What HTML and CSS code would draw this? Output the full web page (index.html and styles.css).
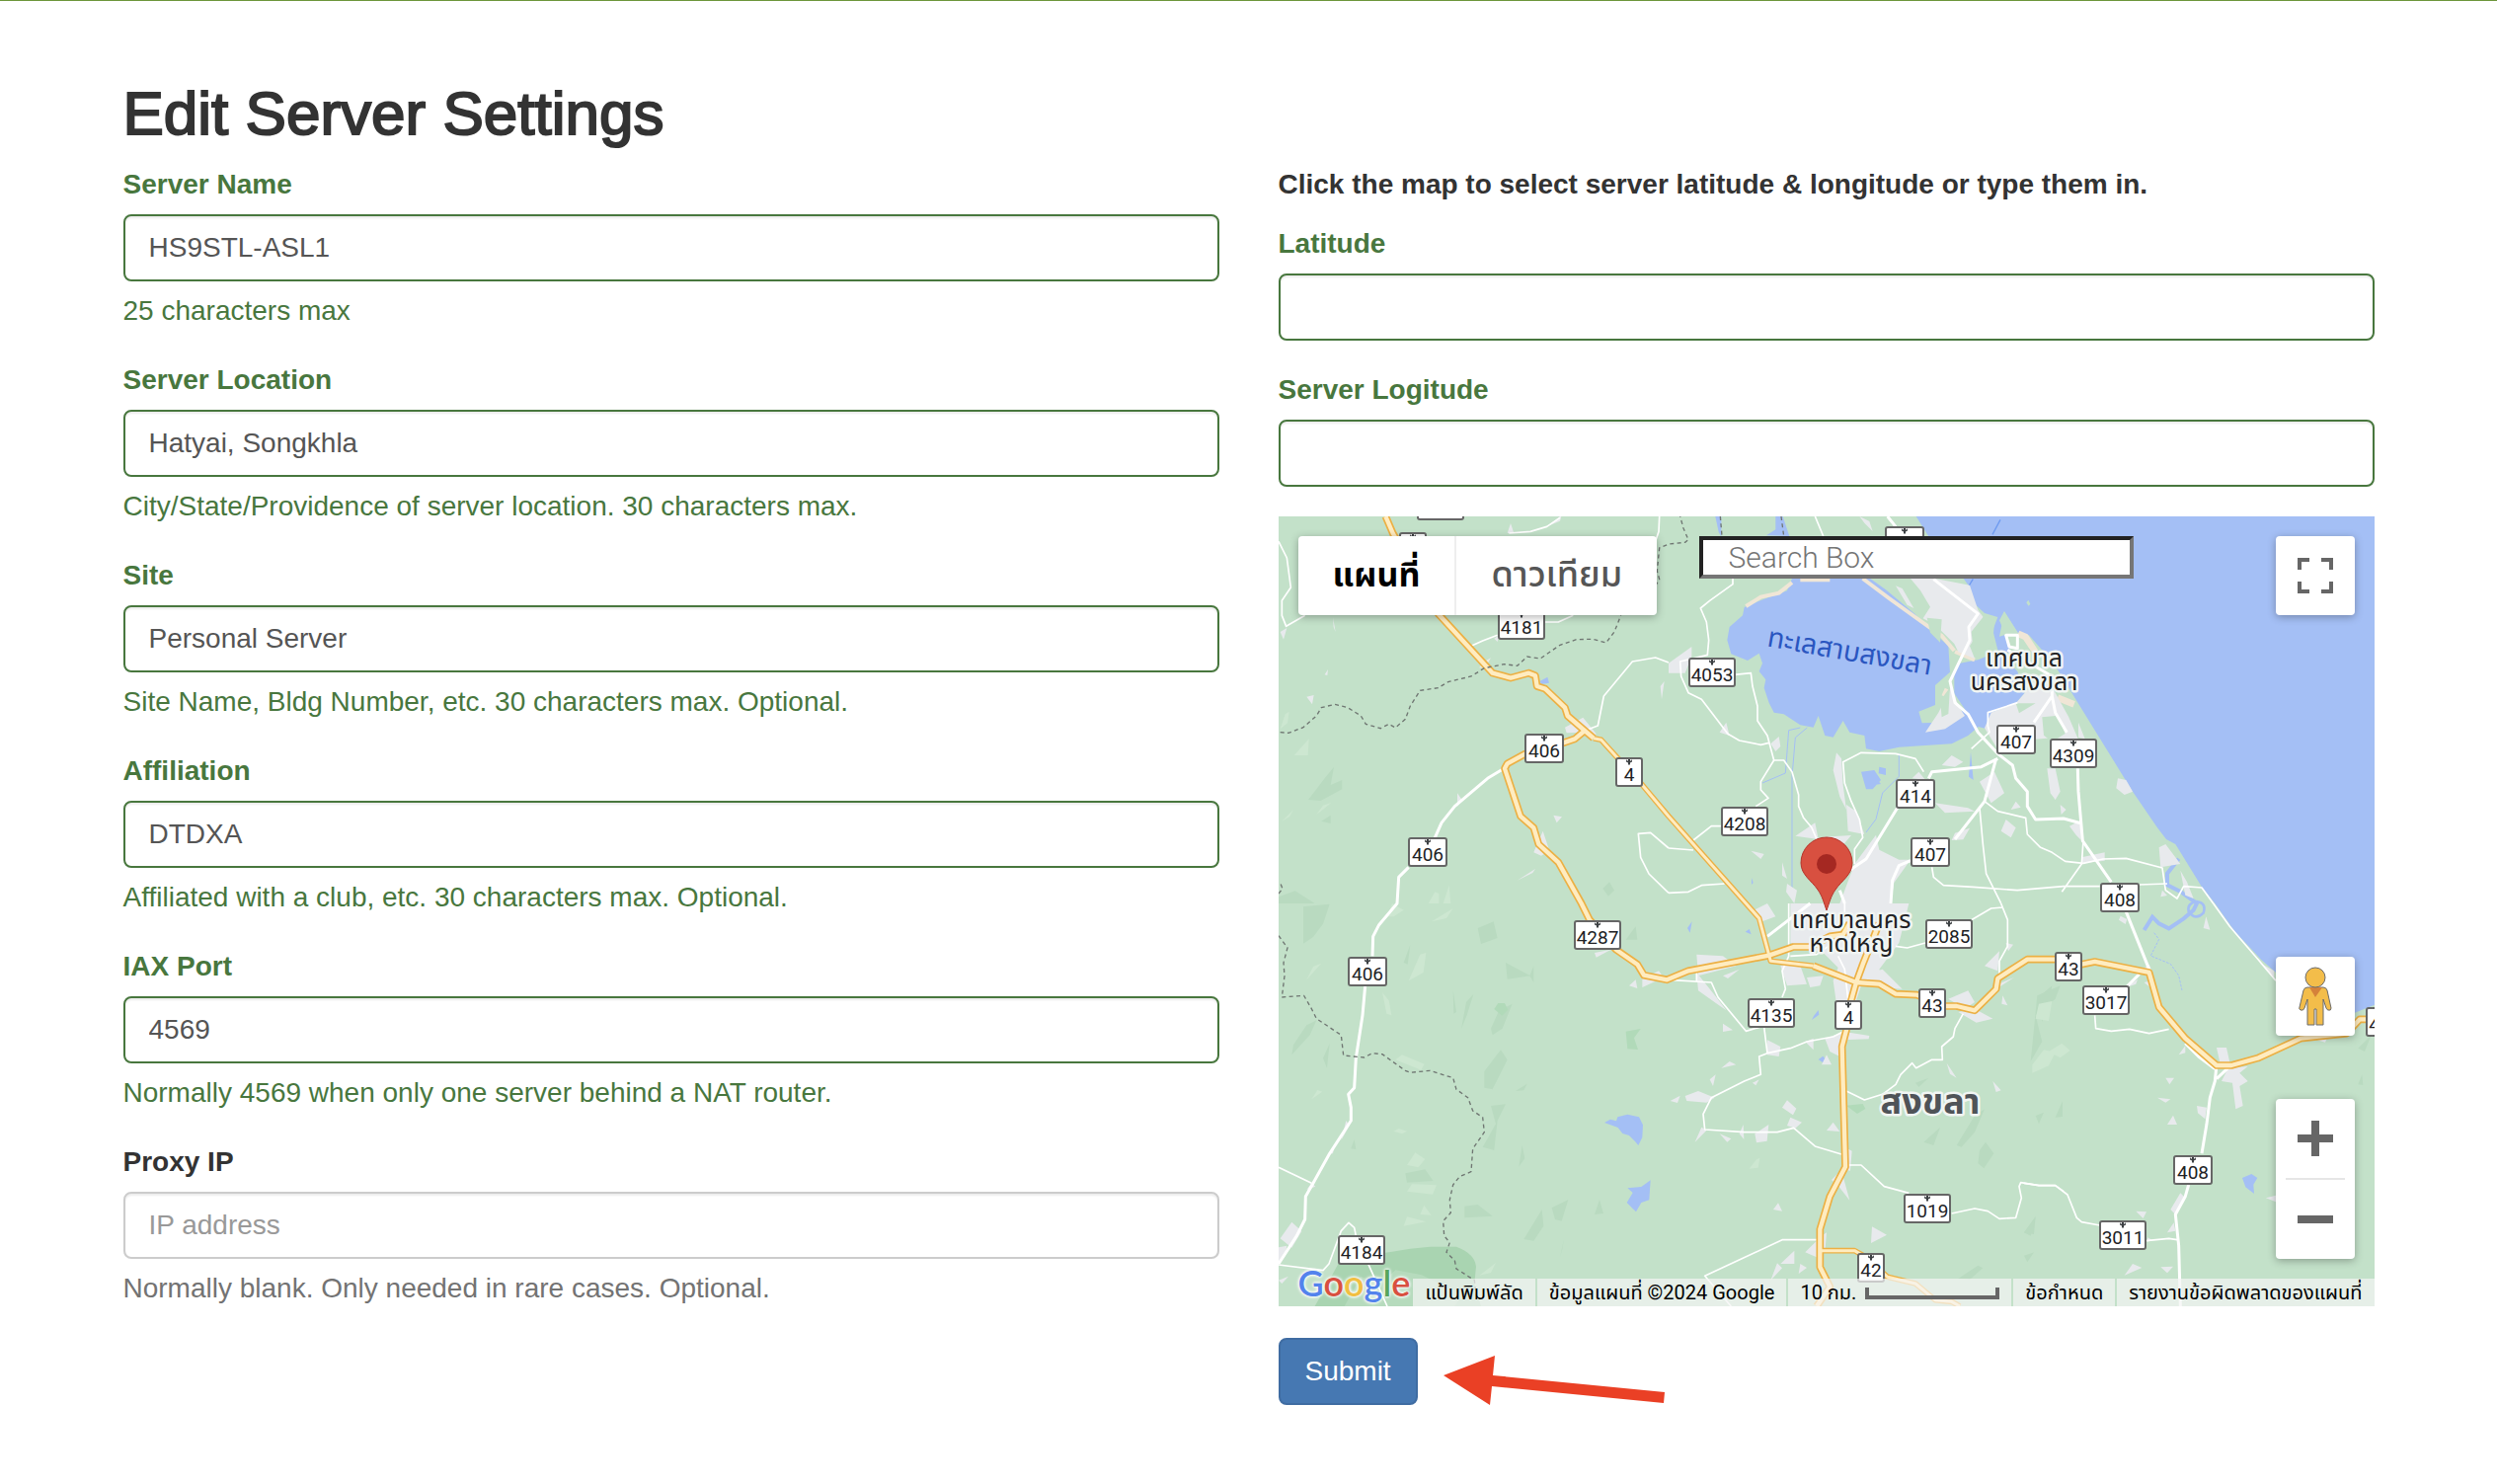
FILE: index.html
```html
<!DOCTYPE html>
<html lang="en">
<head>
  <meta charset="UTF-8">
  <meta name="viewport" content="width=device-width, initial-scale=1.0">
  <title>Edit Server Settings</title>
  <link rel="stylesheet" href="styles.css">
</head>
<body>

<form class="container">
  <h2>Edit Server Settings</h2>

  <div class="row">
    <div class="col">
      <div class="form-group has-success">
        <label for="serverName">Server Name</label>
        <input type="text" id="serverName" class="form-control" value="HS9STL-ASL1" maxlength="25">
        <p class="help-block">25 characters max</p>
      </div>
      <div class="form-group has-success">
        <label for="serverLocation">Server Location</label>
        <input type="text" id="serverLocation" class="form-control" value="Hatyai, Songkhla" maxlength="30">
        <p class="help-block">City/State/Providence of server location. 30 characters max.</p>
      </div>
      <div class="form-group has-success">
        <label for="site">Site</label>
        <input type="text" id="site" class="form-control" value="Personal Server" maxlength="30">
        <p class="help-block">Site Name, Bldg Number, etc. 30 characters max. Optional.</p>
      </div>
      <div class="form-group has-success">
        <label for="affiliation">Affiliation</label>
        <input type="text" id="affiliation" class="form-control" value="DTDXA" maxlength="30">
        <p class="help-block">Affiliated with a club, etc. 30 characters max. Optional.</p>
      </div>
      <div class="form-group has-success">
        <label for="iaxPort">IAX Port</label>
        <input type="text" id="iaxPort" class="form-control" value="4569">
        <p class="help-block">Normally 4569 when only one server behind a NAT router.</p>
      </div>
      <div class="form-group">
        <label for="proxyIp">Proxy IP</label>
        <input type="text" id="proxyIp" class="form-control" placeholder="IP address">
        <p class="help-block">Normally blank. Only needed in rare cases. Optional.</p>
      </div>
    </div>

    <div class="col">
      <p class="map-hint">Click the map to select server latitude &amp; longitude or type them in.</p>
      <div class="form-group has-success">
        <label for="latitude">Latitude</label>
        <input type="text" id="latitude" class="form-control">
      </div>
      <div class="form-group has-success">
        <label for="longitude">Server Logitude</label>
        <input type="text" id="longitude" class="form-control">
      </div>

      <div class="map">
        <svg class="map-canvas" viewBox="0 0 1110 800" preserveAspectRatio="xMidYMid slice" aria-hidden="true">
          <defs>
            <path id="crown" d="M-3-13l1 1.500h1v-1.500h2v1.500h1l1-1.500v2.500l-2 1v2h-2v-2l-2-1z" fill="#3c4043"/>
            <g id="sign2"><rect class="sign" x="-13" y="-14" width="26" height="28" rx="2"/><use href="#crown"/></g>
            <g id="sign3"><rect class="sign" x="-19" y="-14" width="38" height="28" rx="2"/><use href="#crown"/></g>
            <g id="sign4"><rect class="sign" x="-23" y="-14" width="46" height="28" rx="2"/><use href="#crown"/></g>
            <path id="highway43" d="M930 651L900 676 865 688 750 721 695 751 687 766 735 911 775 946 790 996 850 1051 920 1176 945 1226 1025 1316 1090 1361 1110 1394 1180 1408 1245 1381 1490 1334 1565 1308 1615 1308 1675 1276 1715 1271 1735 1236M1625 1366L1755 1416 1825 1421 1875 1451 1940 1454 2025 1488 2060 1488 2115 1501 2180 1436 2185 1404 2275 1346H2360L2440 1361 2480 1353 2645 1386 2675 1491 2755 1586 2850 1668H2895L2975 1646 3105 1586 3245 1571 3285 1528H3330M1825 1236L1775 1361 1755 1416 1730 1506 1725 1561 1712 1611 1722 1976 1675 2066 1645 2166V2281L1675 2341 1635 2400M325 0L347 51 485 296 650 476 705 491 760 476 780 484 785 516 810 524 870 581 878 606 930 651 957 674"/>
            <path id="highway4" d="M957 674L980 679 1030 734 1105 816 1185 911 1420 1176 1460 1221 1495 1351 1625 1366M1645 2231H1750L1785 2251 1850 2311 1935 2331 1995 2381 2045 2386 2070 2400"/>
          </defs>

          <rect width="1110" height="800" fill="#c3e1c9"/>

          <g transform="scale(.33333)">
            <!-- terrain shading -->
            <g fill="#b9dac0">
              <g transform="translate(-15 -24)">
                <path d="M105 885l50-65 28-35-10 55 35-15v28l-65 35zM145 950l28-18v25zM1000 1155l20-20 15 25-18 18zM15 1180l50-18 60 38H15z"/>
              </g>
              <g transform="translate(-15 1176)">
                <path d="M90 10l80-8-20 60-30 40-30 20zM60 430l40-60 30-15-20 45-55 60zM150 470l20-45-8 75zM395 180l20-55-8 60zM545 265l10 65-8 5zM570 380l15-80 22-25-20 65zM620 75l48-20 12 50-50 18zM660 380l25-55 40-20-30 75-30 20zM640 510l50-65 20 30-45 90-25-5zM705 180l75 40-70 10zM790 190v50l-12-20zM580 920l40-5 45 35-85 5zM845 925l50-25-20 65-20-5zM760 1020l55-90 5 50-30 45zM975 945l15-45 12 42zM870 1075l12-55-5 30zM745 800l10-65 8 40zM400 820l60-12 25 35-80 5zM660 615l45-5-25 50-10 90-35-10 40-70zM1070 110l30-40 5 40zM235 745l10-28 5 30zM735 570l35-22-10 20z"/>
              </g>
              <g transform="translate(1185 1176)">
                <path d="M875 735l55-90 30-20-30 70-40 45zM945 750l18-25 25 35-30 45-18-15zM775 725l50-45-20 55zM1080 1000l35-50-5 55zM880 1140l60-40 15 8-40 35zM1130 280l35-30-10 60-20 50zM750 545l40-15-30 28z"/>
              </g>
              <g transform="translate(2265 1176)">
                <path d="M40 280l70-30-15 40-60 50 20 80-35 60zM35 645l25-10-15 35zM95 650l22-50v48zM0 1000l35-45-15 55zM1015 550l12-30 3 32zM1015 440l40-40-20 50zM0 1070l30-10-20 30z"/>
              </g>
            </g>
            <g fill="#cde7d1">
              <g transform="translate(-15 -24)">
                <path d="M20 670l15-45 12-8-5 35zM62 750l45-50-3 50zM25 950l35-35-12 22zM130 930l20-28 25-8-30 25zM470 1200l20-35 12 5v30zM515 1200l18-55 5 55z"/>
              </g>
              <g transform="translate(-15 1176)">
                <path d="M410 235l35-80 18-5-8 60zM100 232l20-40 25-10zM330 270l20 25 8 45-15-5zM405 795l25-38 30 20-20 25zM405 875l15-22 75 3-12 28zM445 945l12-28 22 30zM395 980l10-28 58 15zM370 475l20-15 68 28-10 18zM115 595l18-28 15 5zM345 40l15-40 35 20-30 20zM480 55l65-40-20 30zM625 1130l50-38-15 30zM365 692l15-8 25 8-15 8z"/>
              </g>
              <g transform="translate(2265 1176)">
                <path d="M35 350l10-45 40-8-10 60zM25 490l35-45 35 8-20 40-50 22zM75 450l40-25 25 22-30 22z"/>
              </g>
              <path d="M1430 1982l22-28 10-5-5 30z"/>
            </g>
            <!-- forest around the south west corner -->
            <path fill="#a9d4b1" d="M110 2400l50-90 30-55 150-20 60-10 60-6h80q55 20 60 60l-5 50 20 71z"/>
            <path fill="#b6dbbd" d="M200 2400l50-90 60 20 45-40 80 15 120 60-20 35z"/>
            <path fill="#b1dab9" d="M655 1497l12-18h20l10 20-18 18zM1055 1565l45-8-20 28 12 35-32-2zM1725 1790l50-5 8 15-25 15z"/>

            <!-- sea, lagoon and lake -->
            <g fill="#a4bff5" transform="translate(1185 -24)">
              <path d="M752 24L790 85 850 150 912 235 930 290 960 318 1000 330 985 370 1000 430 1040 440 1022 380 1005 340 1020 312 1062 378 1095 385 1170 470 1225 560 1305 690 1410 860 1485 970 1512 1005 1540 1020 1620 1150 1660 1200 1720 1285 1800 1370 1845 1410 1950 1500 2085 1532 2145 1508V24z"/>
              <path d="M885 470l55-10 60-25 60 60 22 65-25 30-75 30-15 50-37-10-30-50-32-48v-62z"/>
              <path d="M375 213l-15 37-70 25-60 25-5 25-40 35-7 40 12 42 50 20 35-22 10 30-10 25 20 25-5 25 15 45 15 30 30 5 50 33 40 7 15-35 20 60 25 5 30-50 20 35 45 10 5 40 40 8 60-13 80-5 80-5 50-25 35-30-5-30-28-20-22 5-60 35-60 2-10-35 50-20v-60l45-40-5-80-70-60-30-35-90-75-80-57z"/>
              <path d="M142 24h18v62l-8-15zM325 24h22l20 60-70-2 28-18zM585 800l40-5 20 30-25 28h-20zM640 785l20 5v20l-22-5zM635 825l10 12-15 2zM918 740l8 85-14-10zM252 1122l5 15-5 6z"/>
            </g>
            <g fill="#a4bff5">
              <path d="M795 500l22-12 5 18-25 4zM990 1842l18-10 18 5 4-12 30-8 35 8 12 24-2 38-12 24-10-12-18-18-20-6-14-18zM1058 2085l18-30-16-14 42-4 28-20-4 60-24 8-16 28-14-14zM2928 2010l28-12 18 12-12 20 2 28-26-20zM1250 1265l-8-14 14-20zM1620 1530l22-16-2-14-14 18zM1640 1650l14-10 12 14-12 6zM1418 1262l12-8 6 16z"/>
            </g>
            <g fill="none" stroke="#a4bff5">
              <path stroke-width="3" d="M1585 642l-35 8-10 130-70 30M1606 642l-36 30-10 120v350M1885 720v70l-50 50-20 80-30 40M1815 1000v90"/>
              <path stroke-width="12" d="M2735 1040l-35 45v35l40 20 50 36 -10 20-30 26-45 30-30-15-20-20-25 40"/>
              <path stroke-width="8" d="M2765 1200q20 30 45 5 10-30-20-35-30 5-25 30z"/>
              <path stroke-width="3" stroke-dasharray="8 4" d="M2660 1265l15 20-25 50 60 25 25 35 10 45"/>
            </g>
            <path fill="none" stroke="#6f9bf0" stroke-width="4" d="M2193 10l-24 45M2110 190l-12 20"/>
            <g fill="none" stroke="#f0e6d6" stroke-width="12" transform="translate(1185 -24)">
              <path d="M375 225l-40 32-55 12-45 28M400 217h90M590 213l80 60 100 72 60 42 38 45M870 435l60 25M835 570l10-22"/>
              <path stroke-width="20" d="M1062 380l22 10 30 45M1182 575l50 20"/>
            </g>
            <path fill="#c3e1c9" d="M2190 365l15-75 38 60zM2272 262l6-8 6 12-5 6z"/>

            <!-- built up areas -->
            <g fill="#e8eaed">
              <g transform="translate(1185 -24)">
                <path d="M735 213h75l105 20 25 75 25 35-25 35-25 40 15 38-50-20-12-25-55-55-40-22 22-35-30-50zM690 235l20 8 35 60-20-10zM580 24l15 20 25 25-10-30zM980 620l75-28 35-40 75-10 50 90 30 70-80-5-60 5-45 40-60-10-40-65zM0 470l70-50v30l-20 50H0zM155 680l20-30 10 40zM310 715l25-22 5 30-15 15zM510 742l15 18 5 80 10 75-20-40-20-80zM830 780l30-30 35 20-25 15zM945 830l45-30 30 65-40 30zM1010 980l15-35 30 25-15 30zM810 895l100 15 20 10-90 5zM1040 915l15-25 15 18zM860 1008l10-22 45-15-20 35zM740 820l20-20 20 24zM385 995l60-40 10 50zM470 998l85-5-30 35zM540 900l30 20 25 70-50-10zM520 1200l45-120 65-88 10 45 60 30h35l-50 70-10 63zM345 1075l15 50-15-10zM360 1140l30 20-8 40-25-35zM250 1040l40 10-10 15zM780 680l60-10 60-40-20-30-20-60-40 80z"/>
                <path d="M1150 790h25l15 70-15 25-15-20zM1245 650l20 50-20-5zM1365 820l25 5 20 35-25 10-25-20zM1190 900l18 15-15 15zM1218 965l35-18v60l-15-15zM1255 1060l70-15v25l-70 8zM1490 1030l20-10 45 60-60 10zM1555 1100l20 35 20 50-25-10zM1500 1160l-5 20 20-4z"/>
              </g>
              <g transform="translate(-15 -24)">
                <path d="M885 665l55-30 40 50-10 15-30-20-50 2zM20 375l20-12-10 35zM180 330l8 45-6-15zM100 572l22-5-5 28zM155 505l10-16-2 18zM645 462l15-8-18 30h-18zM670 395l15-10-5 20zM558 865l14 20-14 20zM790 1045l28-65 20 60-25 15zM850 932l26 5-16 18zM740 1130l55-35-8 12zM1175 540l12-15-8 55zM710 75l10-30 10 30zM830 55l45-35-5 18z"/>
              </g>
              <g transform="translate(-15 1176)">
                <path d="M20 1018l35-50 30 28-30 50zM15 1045l25-5-5 30-20 20zM205 720l15-60 10 15zM168 760l15-15-3 15zM15 1145l30-12-20 22zM975 150l50-10-45 24zM1080 250l20-18 5 26zM1120 230l50-25 15 20-65 30zM100 870l15-20 12 10z"/>
              </g>
              <g transform="translate(1185 1176)">
                <path d="M370 0h360l-30 120-60 80 20 40-70-5-20 60-60 10-10-70 15-40-45-45-100-30zM85 155l80 5 40 30-115 30zM85 210l60 75 30 40-85-60zM165 220l50-20-35 28zM260 20l40-20 25 40-55 20zM340 190l55-15 25 70-60 5zM420 225l50-5-10 30-30 5zM590 215l60-15 60 60-75-5zM850 290l60-25 20 35-30 20zM880 330l50-10 55 30-50 12zM960 190l45-45-5 60zM1000 245l50-20-55 35zM1015 280l15 30-18-5zM1025 120l22 5-15 20zM475 410l60-20 75 12-2 10-80 3-8 50-30-15zM300 415l40 20-5 30-35-5zM160 500l25-20 20 10zM125 535l18-15-8 35zM50 585l40-15 50 20-25 15-60-5zM5 600l30-16-8 22zM345 620l15-22 28 25-10 20zM360 675l10-25 35 15-20 18zM480 690l20-25 20 28zM262 700l42-28-5 50-32 5zM80 725l20-45 15 10zM155 700l35 15-12 10zM165 365l30 20-30 5zM415 420l25-10v35zM465 490l15-30 15 30zM845 485l30 45-20-12zM985 540l25 28-15 5zM535 740l22 12-5 60-25-5zM495 840l30-30 25 92-35-45zM318 930l15-20 12 25zM618 982l45 25-48 25zM415 1060l50-50 15-10-5 60-25 15zM340 1095l42-40v40zM310 1145l20-52 15 15zM395 1125l5-30 20 12zM255 545l20-10-10 18zM215 700l12-28 2 45z"/>
              </g>
              <g transform="translate(2265 1176)">
                <path d="M288 50l5-12 20 10-5 15zM545 75l8-35 12 40zM355 205l25-20 8 20zM310 255l35-25-5 15zM365 240l20-5-5 18zM470 460l20-28v22zM430 530h26l-14 20zM405 590l40 5-15 10zM435 672l18-28 12 28zM525 615l30 5-5 35-22-18zM585 438h30l10 45h-30zM600 540l20-40 60-5-25 20 25 25-25 15 10 60-22 10-10-80zM445 930l30-50 12 12-25 55zM340 935l32 2-10 20zM435 1000l20-30 5 25zM305 1130l25-35 28 12zM415 1105l38-2-18 20zM735 895l30-8v20zM890 415l30-5-5 12zM715 180l45 25v20zM375 1015l15 8-15 5z"/>
              </g>
            </g>
            <g fill="#c3e1c9">
              <path d="M1970 308l45 5-5 70-30-30zM2105 350l40-50 30 20-5 60-20 40-40-20zM2240 568h60l-50 30zM2320 610l50-5 20 55-40 25-25-20zM2010 560l30-40-5 80-20 10z"/>
            </g>

            <!-- local roads -->
            <g class="road">
              <g transform="translate(-15 -24)">
                <path d="M600 418l35-16 45-17M820 345h45l45-20M945 675l40-15 18-90 87-105 70-12 40 15M15 100l25 50 12 90-27 40v45l13 33 57-33M1172 24l-2 46-10 30M715 75l65-5 50-15 40-27M1200 1032l-55-47-37 3 7 72 25 50 60 58"/>
              </g>
              <g transform="translate(1185 -24)">
                <path d="M445 24l25 60M195 213v17l-70 50-28 23 18 42 7 55-4 45-83 20 3 45 22 50 40 20 80 105 35 20 65 13 25-6M200 505l50-5 5 40 15 60v45l30 45 20 75-40 65v25l23 25-38 25M320 765h30l25 35 20 70v35l15 35 25 30 15 35M775 800l-25-40-60-15-105-3-55 28 5 65 20 55 25 55 10 55-25 35v45M0 1168l60-3 40-20 70-5M0 1032l75 6M75 1008l55-43h30M800 1090l5 30 30 25 90 5 135 10 140-12h110M1430 1143l85-3M960 890l40 30 85 20 5 50 40 40 35 15 40 27 55 6 60-13 70-2 110 29 10 68 35 25 20-37 55 4 35 48M945 910l10 110 10 90 45 90M1260 1010l-5 70-60 85M1060 590l-90 30v40l5 20-55 50"/>
              </g>
              <g transform="translate(-15 1176)">
                <path d="M15 802l100 48M15 1098l135 17 18-20 37-100 23-25 17 15 5 25M285 1090l60 134"/>
              </g>
              <g transform="translate(1185 1176)">
                <path d="M0 232l130 8 20 45 85 103 45-13M85 200v35M290 375l10 80 70-15 50-20 80-15 40-20M300 455l-25 10 5 55-50 20-100 50-25 50 5 47 120 8h100l50-13 65 56 80 24M545 795h40l70 65 75 20M860 942l70-15 40 8 35 23 50-3 17-60-7-35 5-12 55 9h50l25 18M540 570l55 27 55-17 40-30 15-30 35-35 12 15 48-25h32l-2-40 35-30 5-25 25-45M450 1022H345l-235 110 80 92M365 0v160l-20 45 10 55-10 25M1010 0l20 50v80l-25 45v40M920 50l60-35 35-3M690 130l35 5 55-15M370 160l80-5 50-35M515 160l20 40 10 90M535 0v60"/>
              </g>
              <g transform="translate(2265 1176)">
                <path d="M0 850l45 7h50l37 28 28 70 15 13 55 10M370 1025l70-7 25 4M215 340l3 40 47 8 55-6 60 13 60-13M575 0l50 70 30 35 60 70 50 60"/>
              </g>
            </g>
            <g class="road main-road">
              <g transform="translate(-15 -24)">
                <path d="M700 790l-50 30-100 85-40 50-20 45M410 1090l-30 30-5 80-55 65-18 35-2 60M278 1450l-8 90-20 130-5 90-18 20 8 40v40l-65 100-50 90-23 40-2 70-25 50-55 85"/>
              </g>
              <g transform="translate(1185 -24)">
                <path d="M665 24l25 31M805 215l135 105-28 40 3 40-60 125 15 65 40 35 30 55 60 65 45 35 10 40 35 40v45l25 40 85-3 55 15M790 820l10-20 150-15 50-25M695 910l-95 155-80 55M995 760l-35 130-90 115M735 1070l-35 15-20 45-5 70M1165 570l10 50 35 60M1165 570l-55 80M1030 430l135 80v60M1025 385h35v40l-25-5zM1243 790l2 70 13 150 87 125M300 1300l130-100M520 1160l15 40"/>
              </g>
              <g transform="translate(2265 1176)">
                <path d="M310 25l70 175M350 215l-40 40M585 490l-5 50-15 50-10 80-15 90M500 855l-10 35-30 55 10 95 5 184M585 533l35-33M490 425l40 40 50 38"/>
              </g>
            </g>

            <!-- highways: casing first, then the fill -->
            <use href="#highway4" class="highway case narrow"/>
            <use href="#highway43" class="highway case"/>
            <use href="#highway4" class="highway narrow"/>
            <use href="#highway43" class="highway"/>

            <g class="border-line">
              <path d="M5 656l25 2 45-17 40-35 15-25 40-10 40 10 40 25 15 25 45 13 25-13 20 11 30-26 15-40 30-47 55-8 30-18 70-17 40-25 60-12 40 5 30-28 40 6 60-41 50-17 50-1 40 11 25-33 20-50M1145 211l12-20-7-25 7-70 28-12 50-5 10-8-15-35-10-36M1342 0l5 60M1527 0l8 60"/>
              <path d="M0 1274l27 37-12 45 3 40-8 65 67-5 23 40 15 30 75 50 7 62 63 6 25-13 30 3 70 50 15 6 60-6 70 22 10 35 35 25 15 40 30 20 5 45-35 50-5 70-35 15-20 25-10 45 3 40-23 25 3 45 17 20-10 30 25 25 5 25 55 35 5 45M0 1146l12-15-8-20"/>
            </g>
          </g>

          <g class="shields">
            <use href="#sign4" x="164" y="-11"/>
            <use href="#sign2" x="136" y="31"/>
            <use href="#sign3" x="634" y="25"/>
            <g transform="translate(246 110)"><use href="#sign4"/><text y="9">4181</text></g>
            <g transform="translate(269 235)"><use href="#sign3"/><text y="9">406</text></g>
            <g transform="translate(355 259)"><use href="#sign2"/><text y="9">4</text></g>
            <g transform="translate(151 340)"><use href="#sign3"/><text y="9">406</text></g>
            <g transform="translate(439 158)"><use href="#sign4"/><text y="9">4053</text></g>
            <g transform="translate(472 309)"><use href="#sign4"/><text y="9">4208</text></g>
            <g transform="translate(645 281)"><use href="#sign3"/><text y="9">414</text></g>
            <g transform="translate(747 226)"><use href="#sign3"/><text y="9">407</text></g>
            <g transform="translate(660 340)"><use href="#sign3"/><text y="9">407</text></g>
            <g transform="translate(805 240)"><use href="#sign4"/><text y="9">4309</text></g>
            <g transform="translate(852 386)"><use href="#sign3"/><text y="9">408</text></g>
            <g transform="translate(323 424)"><use href="#sign4"/><text y="9">4287</text></g>
            <g transform="translate(90 461)"><use href="#sign3"/><text y="9">406</text></g>
            <g transform="translate(84 743)"><use href="#sign4"/><text y="9">4184</text></g>
            <g transform="translate(679 423)"><use href="#sign4"/><text y="9">2085</text></g>
            <g transform="translate(499 503)"><use href="#sign4"/><text y="9">4135</text></g>
            <g transform="translate(577 505)"><use href="#sign2"/><text y="9">4</text></g>
            <g transform="translate(662 493)"><use href="#sign2"/><text y="9">43</text></g>
            <g transform="translate(657 701)"><use href="#sign4"/><text y="9">1019</text></g>
            <g transform="translate(600 761)"><use href="#sign2"/><text y="9">42</text></g>
            <g transform="translate(800 456)"><use href="#sign2"/><text y="9">43</text></g>
            <g transform="translate(838 490)"><use href="#sign4"/><text y="9">3017</text></g>
            <g transform="translate(926 662)"><use href="#sign3"/><text y="9">408</text></g>
            <g transform="translate(855 728)"><use href="#sign4"/><text y="9">3011</text></g>
            <g transform="translate(1115 512)"><use href="#sign2"/><text y="9">43</text></g>
          </g>

          <g class="places">
            <text class="water-name" transform="translate(577 146) rotate(10)">ทะเลสาบสงขลา</text>
            <text x="755" y="152">เทศบาล</text>
            <text x="755" y="176">นครสงขลา</text>
            <text x="580" y="417">เทศบาลนคร</text>
            <text x="580" y="441">หาดใหญ่</text>
            <text class="province" x="660" y="605">สงขลา</text>
          </g>

          <path d="M555 399c-3-8-4-14-9-21-6-9-17-15-17-27a26 26 0 0 1 52 0c0 12-11 18-17 27-5 7-6 13-9 21z" fill="#d85040" stroke="#b5332a" stroke-width="1"/>
          <circle cx="555" cy="352" r="10" fill="#a52822"/>
        </svg>

        <div class="map-types">
          <button type="button" class="active">แผนที่</button>
          <button type="button">ดาวเทียม</button>
        </div>

        <input type="text" class="map-search" placeholder="Search Box" aria-label="Search Box">

        <button type="button" class="map-button fullscreen" aria-label="Fullscreen">
          <svg width="36" height="36" viewBox="0 0 18 18"><path fill="#666" d="M0 0v6h2V2h4V0zM16 0h-4v2h4v4h2V0zM16 16h-4v2h6v-6h-2zM2 12H0v6h6v-2H2z"/></svg>
        </button>

        <div class="map-side">
          <button type="button" class="map-button" aria-label="Street View">
            <svg width="34" height="60" viewBox="0 0 34 60">
              <path fill="#f3bd4a" stroke="#6b6b6b" stroke-width="1" d="M9 21h16q3 0 4 3l4 18q0 3-3 2-1 0-2-2l-3-9v26h-7V43h-2v16H9V33l-3 9q-1 3-4 2-2-1-1-3l4-17q1-3 4-3z"/>
              <path fill="#d5823a" d="M11 21h13l-7 10z"/>
              <circle cx="17" cy="11" r="10" fill="#f3bd4a" stroke="#6b6b6b"/>
            </svg>
          </button>
          <div class="zoom">
            <button type="button" aria-label="Zoom in">
              <svg width="36" height="36" viewBox="0 0 18 18"><path fill="#666" d="M7 0h4v7h7v4h-7v7H7v-7H0V7h7z"/></svg>
            </button>
            <button type="button" aria-label="Zoom out">
              <svg width="36" height="36" viewBox="0 0 18 18"><path fill="#666" d="M0 7h18v4H0z"/></svg>
            </button>
          </div>
        </div>

        <a href="#" class="google"><span class="blue">G</span><span class="red">o</span><span class="yellow">o</span><span class="blue">g</span><span class="green">l</span><span class="red">e</span></a>

        <div class="map-footer">
          <button type="button">แป้นพิมพ์ลัด</button>
          <span>ข้อมูลแผนที่ ©2024 Google</span>
          <button type="button" class="scale">10 กม. <i></i></button>
          <a href="#">ข้อกำหนด</a>
          <a href="#">รายงานข้อผิดพลาดของแผนที่</a>
        </div>
      </div>

      <div class="actions">
        <button type="submit" class="btn-primary">Submit</button>
        <svg class="arrow" width="224" height="52" viewBox="0 0 224 52" aria-hidden="true">
          <path fill="#ea4025" d="M0 22L52 2l-2 20 174 17-1 11-174-17-2 19z"/>
        </svg>
      </div>
    </div>
  </div>
</form>

</body>
</html>
```
FILE: styles.css
```css
* {
  box-sizing: border-box;
}

body {
  margin: 0;
  border-top: 1px solid #6d963b;
  font-family: "Liberation Sans", Arial, sans-serif;
  font-size: 28px;
  line-height: 40px;
  color: #333;
  background: #fff;
}

input,
button {
  font-family: inherit;
}

.container {
  max-width: 2340px;
  margin: 0 auto;
  padding: 80px 30px 64px;
}

h2 {
  margin: 0 0 18px;
  font-size: 62px;
  font-weight: 400;
  line-height: 68px;
  -webkit-text-stroke: 2px #333;
}

.row {
  display: grid;
  grid-template-columns: 1fr 1fr;
  gap: 60px;
}

.col {
  min-width: 0;
}

/* Form fields */
.form-group {
  margin-bottom: 30px;
}

.form-group label {
  display: block;
  margin-bottom: 10px;
  font-weight: bold;
}

.form-control {
  display: block;
  width: 100%;
  height: 68px;
  padding: 12px 24px;
  border: 2px solid #ccc;
  border-radius: 8px;
  font-size: 28px;
  color: #555;
  background: #fff;
  box-shadow: inset 0 2px 2px rgba(0, 0, 0, 0.075);
}

.form-control::placeholder {
  color: #999;
}

.help-block {
  margin: 10px 0 0;
  color: #737373;
}

.has-success label,
.has-success .help-block {
  color: #48773e;
}

.has-success .form-control {
  border-color: #48773e;
}

.map-hint {
  margin: 0 0 20px;
  font-weight: bold;
}

/* Map */
.map {
  position: relative;
  height: 800px;
  overflow: hidden;
  font-family: Roboto, "Noto Sans Thai", sans-serif;
}

.map-canvas {
  display: block;
  width: 100%;
  height: 100%;
}

.road {
  fill: none;
  stroke: #fff;
  stroke-width: 5;
  stroke-linejoin: round;
}

.main-road {
  stroke-width: 9;
}

.highway {
  fill: none;
  stroke: #ffecc0;
  stroke-width: 13;
  stroke-linejoin: round;
}

.highway.narrow {
  stroke-width: 9;
}

.highway.case {
  stroke: #ecb044;
  stroke-width: 23;
}

.highway.case.narrow {
  stroke-width: 17;
}

.border-line {
  fill: none;
  stroke: #6f7672;
  stroke-width: 4;
  stroke-dasharray: 12 10;
}

.sign {
  fill: #fff;
  stroke: #666;
  stroke-width: 2;
}

.shields text {
  font-size: 19px;
  text-anchor: middle;
  fill: #202124;
}

.places text {
  font-size: 25px;
  text-anchor: middle;
  fill: #202124;
  stroke: #f1f5f3;
  stroke-width: 5;
  stroke-linejoin: round;
  paint-order: stroke;
}

.places .water-name {
  font-size: 28px;
  fill: #2a56c0;
  stroke: none;
}

.places .province {
  font-size: 36px;
  font-weight: bold;
  fill: #4f5358;
}

.map-types,
.map-button,
.zoom {
  border-radius: 4px;
  background: #fff;
  box-shadow: 0 2px 8px rgba(0, 0, 0, 0.3);
}

.map-types {
  position: absolute;
  top: 20px;
  left: 20px;
  display: flex;
  height: 80px;
}

.map-types button {
  padding: 0 35px;
  border: 0;
  font-size: 36px;
  font-weight: 500;
  color: #565656;
  background: none;
}

.map-types .active {
  font-size: 34px;
  font-weight: bold;
  color: #000;
  border-right: 2px solid #eee;
}

.map-search {
  position: absolute;
  top: 20px;
  left: 426px;
  width: 440px;
  height: 43px;
  padding: 0 22px 0 26px;
  border: 4px solid;
  border-color: #222 #767676 #767676 #222;
  font-size: 30px;
  font-weight: 300;
  background: #fff;
}

.map-search::placeholder {
  color: #757575;
}

.map-button {
  display: flex;
  align-items: center;
  justify-content: center;
  width: 80px;
  height: 80px;
  padding: 0;
  border: 0;
}

.fullscreen {
  position: absolute;
  top: 20px;
  right: 20px;
}

.map-side {
  position: absolute;
  right: 20px;
  bottom: 48px;
  display: flex;
  flex-direction: column;
  gap: 64px;
}

.zoom {
  display: flex;
  flex-direction: column;
  align-items: center;
}

.zoom button {
  display: flex;
  align-items: center;
  justify-content: center;
  width: 60px;
  height: 80px;
  padding: 0;
  border: 0;
  background: none;
}

.zoom button + button {
  height: 82px;
  border-top: 2px solid #e6e6e6;
}

.google {
  position: absolute;
  left: 20px;
  bottom: 6px;
  font-family: Lato, sans-serif;
  font-size: 36px;
  font-weight: 600;
  line-height: 36px;
  text-decoration: none;
  text-shadow: 0 0 3px #fff, 0 0 3px #fff, 0 0 4px #fff;
}

.blue {
  color: #5383ec;
}

.red {
  color: #d85040;
}

.yellow {
  color: #f1bf42;
}

.green {
  color: #58a55c;
}

.map-footer {
  position: absolute;
  right: 0;
  bottom: 0;
  display: flex;
  gap: 2px;
  height: 28px;
  font-size: 20px;
  line-height: 28px;
  white-space: nowrap;
}

.map-footer > * {
  padding: 0 12px;
  border: 0;
  font-size: 20px;
  line-height: 28px;
  color: #000;
  text-decoration: none;
  background: rgba(245, 245, 245, 0.7);
}

.scale i {
  display: inline-block;
  width: 136px;
  height: 12px;
  margin-left: 4px;
  border: 4px solid #666;
  border-top: 0;
}

/* Submit row */
.actions {
  display: flex;
  align-items: flex-end;
  gap: 26px;
  margin-top: 32px;
}

.btn-primary {
  height: 68px;
  padding: 0 25px;
  border: 2px solid #3f6ca2;
  border-radius: 8px;
  font-size: 28px;
  color: #fff;
  background: #4678b2;
  cursor: pointer;
}
```
